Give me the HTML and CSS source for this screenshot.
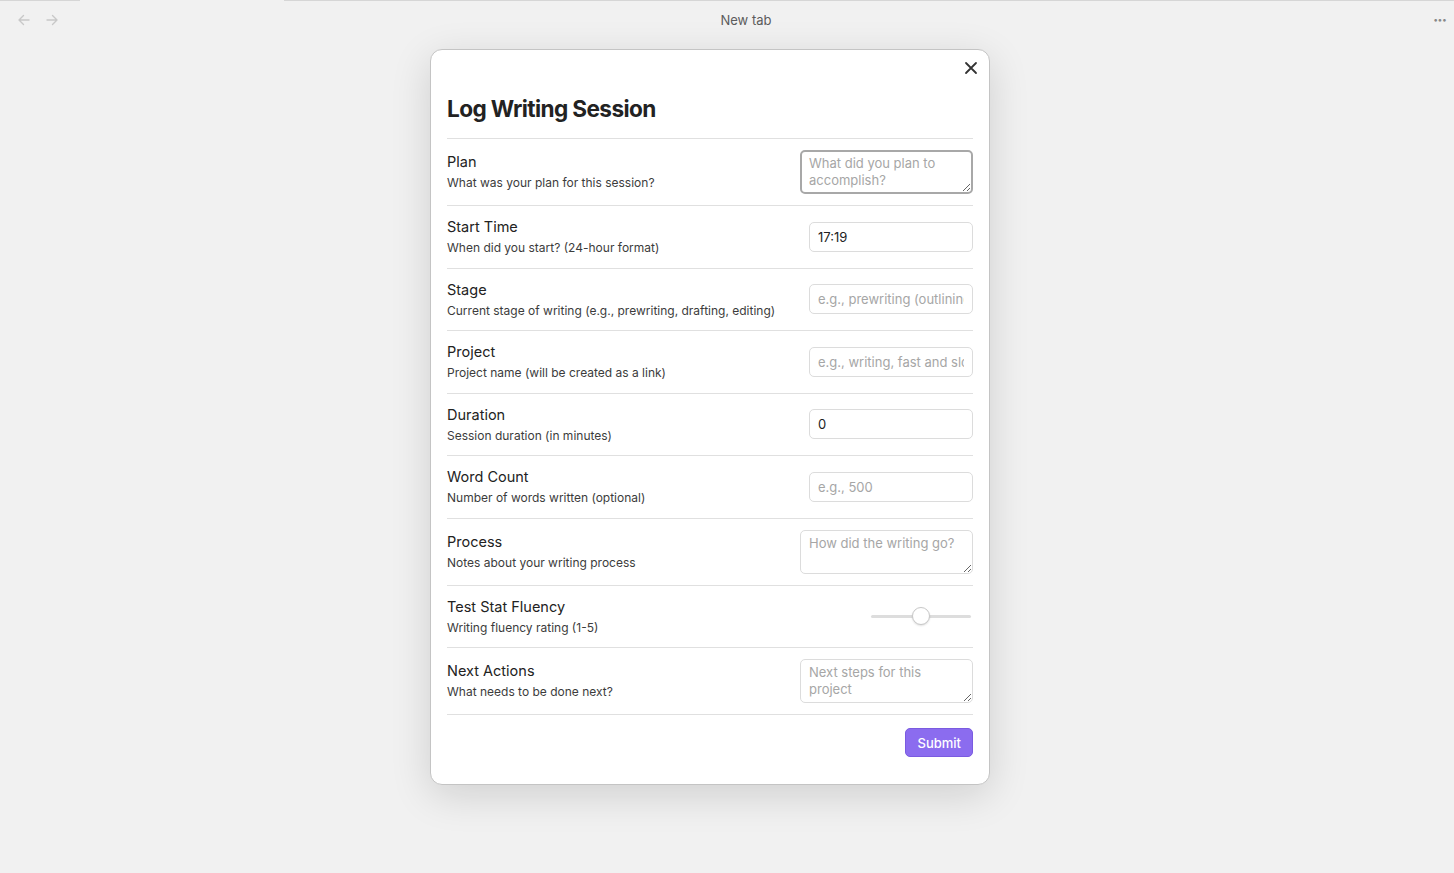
FILE: index.html
```html
<!DOCTYPE html>
<html lang="en">
<head>
  <meta charset="UTF-8">
  <title>Log Writing Session</title>
  <link rel="stylesheet" href="styles.css">
</head>
<body>
  <div class="titlebar">
    <div class="nav-arrows">
      <svg width="14" height="14" viewBox="0 0 14 14"><path d="M12 7H2M6.5 2.5L2 7l4.5 4.5" fill="none" stroke="#c8c8c8" stroke-width="1.4" stroke-linecap="round" stroke-linejoin="round"/></svg>
      <svg width="14" height="14" viewBox="0 0 14 14"><path d="M2 7h10M7.5 2.5L12 7l-4.5 4.5" fill="none" stroke="#c8c8c8" stroke-width="1.4" stroke-linecap="round" stroke-linejoin="round"/></svg>
    </div>
    <div class="tab-title">New tab</div>
    <div class="more">&middot;&middot;&middot;</div>
  </div>

  <div class="stage">
    <div class="modal">
      <button class="close" aria-label="Close">
        <svg width="14" height="14" viewBox="0 0 14 14"><path d="M2 2l10 10M12 2L2 12" stroke="#333" stroke-width="1.8" stroke-linecap="round"/></svg>
      </button>
      <h1>Log Writing Session</h1>

      <div class="setting">
        <div class="info">
          <div class="name">Plan</div>
          <div class="desc">What was your plan for this session?</div>
        </div>
        <textarea class="focused" placeholder="What did you plan to accomplish?"></textarea>
      </div>

      <div class="setting">
        <div class="info">
          <div class="name">Start Time</div>
          <div class="desc">When did you start? (24-hour format)</div>
        </div>
        <input type="text" value="17:19">
      </div>

      <div class="setting">
        <div class="info">
          <div class="name">Stage</div>
          <div class="desc">Current stage of writing (e.g., prewriting, drafting, editing)</div>
        </div>
        <input type="text" placeholder="e.g., prewriting (outlining, brainstorming)">
      </div>

      <div class="setting">
        <div class="info">
          <div class="name">Project</div>
          <div class="desc">Project name (will be created as a link)</div>
        </div>
        <input type="text" placeholder="e.g., writing, fast and slow">
      </div>

      <div class="setting">
        <div class="info">
          <div class="name">Duration</div>
          <div class="desc">Session duration (in minutes)</div>
        </div>
        <input type="text" value="0">
      </div>

      <div class="setting">
        <div class="info">
          <div class="name">Word Count</div>
          <div class="desc">Number of words written (optional)</div>
        </div>
        <input type="text" placeholder="e.g., 500">
      </div>

      <div class="setting">
        <div class="info">
          <div class="name">Process</div>
          <div class="desc">Notes about your writing process</div>
        </div>
        <textarea placeholder="How did the writing go?"></textarea>
      </div>

      <div class="setting">
        <div class="info">
          <div class="name">Test Stat Fluency</div>
          <div class="desc">Writing fluency rating (1-5)</div>
        </div>
        <input type="range" class="slider" min="1" max="5" value="3">
      </div>

      <div class="setting">
        <div class="info">
          <div class="name">Next Actions</div>
          <div class="desc">What needs to be done next?</div>
        </div>
        <textarea placeholder="Next steps for this project"></textarea>
      </div>

      <div class="actions">
        <button class="submit">Submit</button>
      </div>
    </div>
  </div>
</body>
</html>
```

FILE: styles.css
```css
body {
  margin: 0;
  background-color: #f1f1f1;
  font-family: Inter, "Liberation Sans", sans-serif;
  color: #222;
  height: 873px;
  overflow: hidden;
}
.titlebar {
  height: 38px;
  display: flex;
  align-items: center;
  position: relative;
  border-top: 1px solid #d6d6d6;
  box-sizing: border-box;
}
.titlebar::before {
  content: "";
  position: absolute;
  top: -1px;
  left: 80px;
  width: 204px;
  height: 1px;
  background: #f1f1f1;
}
.nav-arrows {
  display: flex;
  gap: 14px;
  padding-left: 17px;
}
.tab-title {
  position: absolute;
  left: 0;
  right: 0;
  text-align: center;
  font-size: 13px;
  color: #5c5c5c;
  padding-left: 38px;
}
.more {
  margin-left: auto;
  padding-right: 8px;
  color: #888;
  font-size: 16px;
  letter-spacing: -1px;
  font-weight: bold;
}
.stage {
  padding-top: 11px;
  padding-left: 430px;
}
.modal {
  position: relative;
  width: 526px;
  padding: 16px 16px 27px;
  background: #fff;
  border: 1px solid #c4c4c4;
  border-radius: 12px;
  box-shadow: 0 10px 40px rgba(0, 0, 0, 0.14);
}
.close {
  position: absolute;
  top: 6px;
  right: 6px;
  width: 24px;
  height: 24px;
  display: flex;
  align-items: center;
  justify-content: center;
  border: none;
  background: none;
  padding: 0;
}
.modal h1 {
  margin: 28px 0 14px;
  font-size: 22.6px;
  font-weight: 700;
  letter-spacing: -0.6px;
  line-height: 30px;
  color: #222;
}
.setting {
  display: flex;
  align-items: center;
  padding: 11px 0;
  border-top: 1px solid #e0e0e0;
}
.info {
  flex: 1;
}
.name {
  font-size: 14.5px;
  line-height: 19.5px;
  color: #222;
}
.desc {
  margin-top: 3.5px;
  font-size: 12px;
  line-height: 16.5px;
  color: #3c3c3c;
}
input[type="text"],
textarea {
  font-family: inherit;
  font-size: 13px;
  color: #222;
  border: 1px solid #dcdcdc;
  border-radius: 5px;
  background: #fff;
  box-sizing: border-box;
  outline: none;
}
input[type="text"] {
  width: 164px;
  height: 30px;
  padding: 0 8px;
}
textarea {
  width: 173px;
  height: 44px;
  padding: 4px 8px;
  line-height: 17px;
  resize: vertical;
}
textarea.focused {
  border: 2px solid #a8a8a8;
  padding: 3px 7px;
}
::placeholder {
  color: #a6a6a6;
}
.slider {
  -webkit-appearance: none;
  appearance: none;
  width: 100px;
  height: 20px;
  margin: 0 2px 0 0;
  background: transparent;
}
.slider::-webkit-slider-runnable-track {
  height: 3px;
  background: #dddddd;
  border-radius: 2px;
}
.slider::-webkit-slider-thumb {
  -webkit-appearance: none;
  width: 18px;
  height: 18px;
  margin-top: -8px;
  border-radius: 50%;
  background: #fff;
  border: 1px solid #c8c8c8;
  box-shadow: 0 1px 2px rgba(0, 0, 0, 0.12);
}
.actions {
  display: flex;
  justify-content: flex-end;
  border-top: 1px solid #e0e0e0;
  padding-top: 13px;
}
.submit {
  font-family: inherit;
  font-size: 13px;
  font-weight: 500;
  color: #fff;
  background: #8b6cef;
  border: 1px solid #7a5be0;
  border-radius: 5px;
  height: 29px;
  padding: 0 11px;
}
```
